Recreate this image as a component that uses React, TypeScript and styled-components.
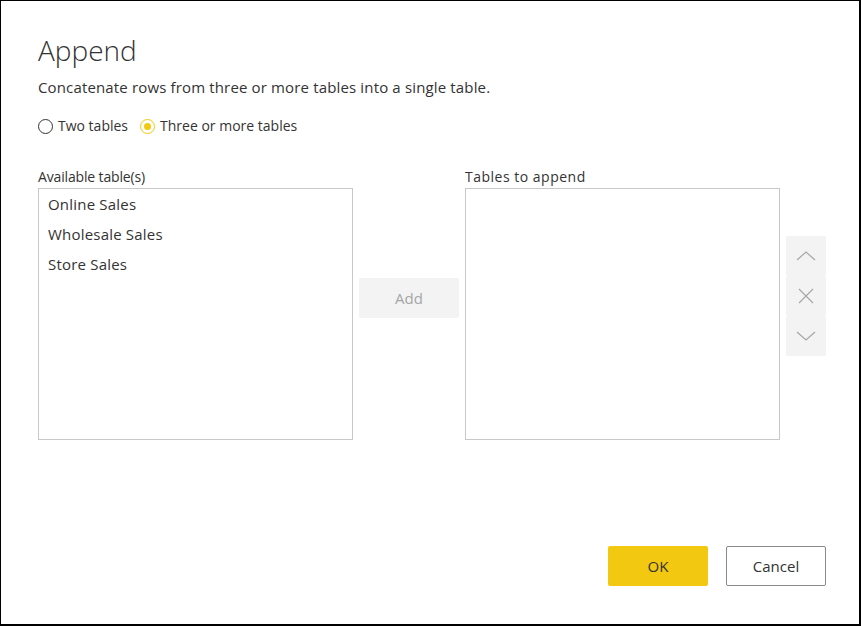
import React, { useState } from "react";
import styled, { createGlobalStyle } from "styled-components";

const Global = createGlobalStyle`
  html, body { margin: 0; padding: 0; background: #fff; }
  * { box-sizing: border-box; }
  body { font-family: "Open Sans", "Noto Sans", "Liberation Sans", sans-serif; color: #333; }
`;

const Dialog = styled.div`
  width: 861px;
  height: 626px;
  border-style: solid;
  border-color: #000;
  border-width: 1px 2px 2px 1px;
  padding: 29px 0 0 37px;
  display: flex;
  flex-direction: column;
`;

const Title = styled.h1`
  margin: 0;
  font-size: 28px;
  font-weight: 300;
  line-height: 40px;
  color: #333;
`;

const Description = styled.p`
  margin: 7px 0 0;
  font-size: 15px;
  letter-spacing: 0.15px;
  line-height: 20px;
  color: #333;
`;

const RadioGroup = styled.div`
  display: flex;
  gap: 12px;
  margin-top: 19px;
  align-items: center;
`;

const RadioLabel = styled.label`
  display: flex;
  align-items: center;
  gap: 5px;
  font-size: 14px;
  line-height: 20px;
  color: #333;
  cursor: pointer;
`;

const RadioCircle = styled.span<{ $checked: boolean }>`
  width: 15px;
  height: 15px;
  border-radius: 50%;
  border: 1px solid ${(p) => (p.$checked ? "#f2c811" : "#333")};
  display: flex;
  align-items: center;
  justify-content: center;
  &::after {
    content: "";
    width: 7px;
    height: 7px;
    border-radius: 50%;
    background: ${(p) => (p.$checked ? "#f2c811" : "transparent")};
  }
`;

const Columns = styled.div`
  display: flex;
  margin-top: 31px;
`;

const ListColumn = styled.div`
  display: flex;
  flex-direction: column;
  width: 315px;
`;

const ListLabel = styled.div<{ $wide?: boolean }>`
  font-size: 14px;
  letter-spacing: ${(p) => (p.$wide ? "0.5px" : "-0.15px")};
  line-height: 20px;
  height: 21px;
  color: #333;
`;

const ListBox = styled.ul`
  list-style: none;
  margin: 0;
  padding: 0;
  height: 252px;
  border: 1px solid #c8c8c8;
`;

const ListItem = styled.li`
  font-size: 15px;
  letter-spacing: 0.2px;
  line-height: 30px;
  height: 30px;
  padding-left: 9px;
  color: #333;
`;

const MiddleColumn = styled.div`
  width: 112px;
  display: flex;
  justify-content: center;
  padding-top: 111px;
`;

const GreyButton = styled.button`
  width: 100px;
  height: 40px;
  border: none;
  border-radius: 2px;
  background: #f3f3f3;
  color: #a6a6a6;
  font-family: inherit;
  font-size: 15px;
`;

const ArrowColumn = styled.div`
  margin-left: 6px;
  padding-top: 69px;
  display: flex;
  flex-direction: column;
`;

const IconButton = styled.button`
  width: 40px;
  height: 40px;
  border: none;
  border-radius: 2px;
  background: #f3f3f3;
  display: flex;
  align-items: center;
  justify-content: center;
  padding: 0;
`;

const Footer = styled.div`
  margin-top: auto;
  display: flex;
  justify-content: flex-end;
  gap: 18px;
  padding: 0 33px 38px 0;
`;

const PrimaryButton = styled.button`
  width: 100px;
  height: 40px;
  border: none;
  border-radius: 2px;
  background: #f2c811;
  color: #333;
  font-family: inherit;
  font-size: 15px;
`;

const SecondaryButton = styled.button`
  width: 100px;
  height: 40px;
  border: 1px solid #8a8a8a;
  border-radius: 2px;
  background: #fff;
  color: #333;
  font-family: inherit;
  font-size: 15px;
`;

const Icon = ({ d }: { d: string }) => (
  <svg width="20" height="20" viewBox="0 0 20 20" fill="none" stroke="#a6a6a6" strokeWidth="1.2">
    <path d={d} />
  </svg>
);

export default function App() {
  const [mode, setMode] = useState<"two" | "three">("three");
  return (
    <>
      <Global />
      <Dialog>
        <Title>Append</Title>
        <Description>Concatenate rows from three or more tables into a single table.</Description>
        <RadioGroup>
          <RadioLabel onClick={() => setMode("two")}>
            <RadioCircle $checked={mode === "two"} />
            Two tables
          </RadioLabel>
          <RadioLabel onClick={() => setMode("three")}>
            <RadioCircle $checked={mode === "three"} />
            Three or more tables
          </RadioLabel>
        </RadioGroup>
        <Columns>
          <ListColumn>
            <ListLabel>Available table(s)</ListLabel>
            <ListBox>
              <ListItem>Online Sales</ListItem>
              <ListItem>Wholesale Sales</ListItem>
              <ListItem>Store Sales</ListItem>
            </ListBox>
          </ListColumn>
          <MiddleColumn>
            <GreyButton>Add</GreyButton>
          </MiddleColumn>
          <ListColumn>
            <ListLabel $wide>Tables to append</ListLabel>
            <ListBox />
          </ListColumn>
          <ArrowColumn>
            <IconButton aria-label="Move up">
              <Icon d="M1 14 L10 6 L19 14" />
            </IconButton>
            <IconButton aria-label="Remove">
              <Icon d="M3 3 L17 17 M17 3 L3 17" />
            </IconButton>
            <IconButton aria-label="Move down">
              <Icon d="M1 6 L10 14 L19 6" />
            </IconButton>
          </ArrowColumn>
        </Columns>
        <Footer>
          <PrimaryButton>OK</PrimaryButton>
          <SecondaryButton>Cancel</SecondaryButton>
        </Footer>
      </Dialog>
    </>
  );
}
